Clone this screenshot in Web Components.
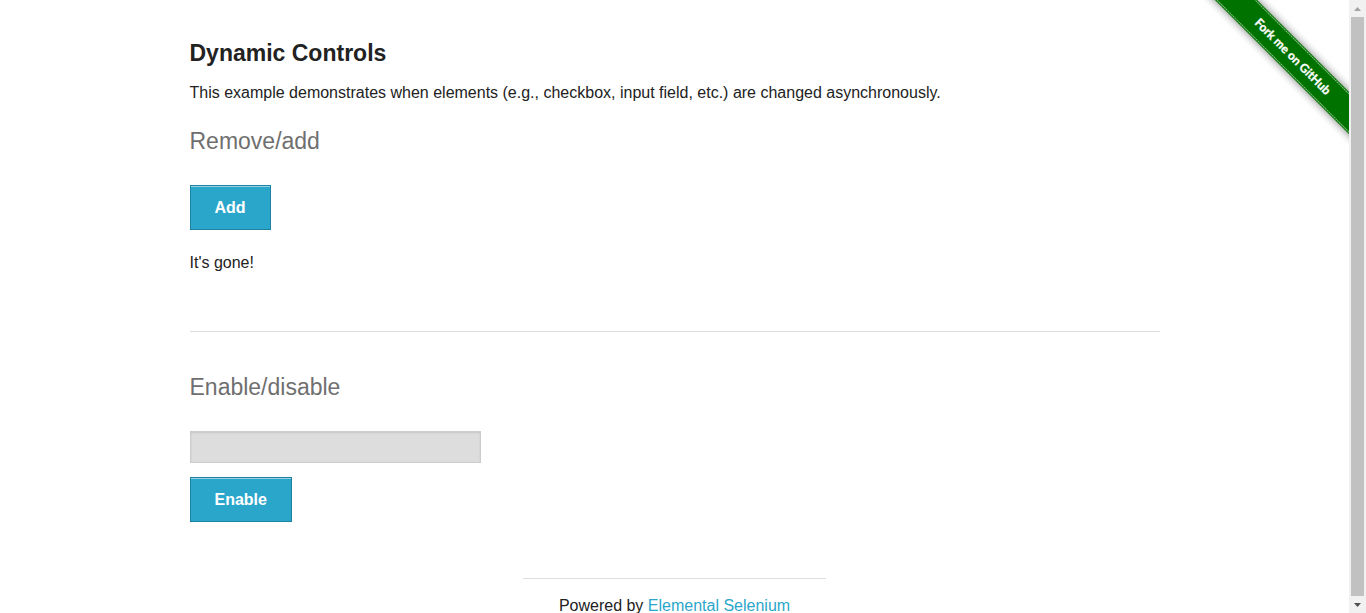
<!DOCTYPE html>
<html lang="en">
<head>
<meta charset="utf-8">
<title>The Internet</title>
<style>
body { margin: 0; background: #fff; color: #222; font: 16px/26px "Liberation Sans", Arial, sans-serif; }
</style>
</head>
<body>
<page-frame>
  <fork-ribbon slot="ribbon"></fork-ribbon>
  <page-content>
    <span slot="title">Dynamic Controls</span>
    <span slot="intro">This example demonstrates when elements (e.g., checkbox, input field, etc.) are changed asynchronously.</span>
    <checkbox-example></checkbox-example>
    <input-example></input-example>
  </page-content>
  <page-footer></page-footer>
</page-frame>

<script>
function define(name, html) {
  const template = document.createElement('template');
  template.innerHTML = '<style>:host,*{box-sizing:border-box}</style>' + html;
  customElements.define(name, class extends HTMLElement {
    constructor() {
      super();
      this.attachShadow({ mode: 'open' }).append(template.content.cloneNode(true));
    }
  });
}

define('page-frame', `
<style>
:host { display: grid; grid-template-columns: minmax(0, 1fr) 17px; height: 100vh; overflow: hidden; }
.view { position: relative; min-width: 0; overflow: hidden; }
</style>
<div class="view"><slot name="ribbon"></slot><slot></slot></div>
<scroll-track></scroll-track>`);

define('scroll-track', `
<style>
:host { display: flex; flex-direction: column; background: #f1f1f1; }
svg { display: block; width: 17px; height: 17px; flex: none; }
.thumb { flex: 1; margin: 0 2px; background: #c1c1c1; }
</style>
<svg viewBox="0 0 17 17" aria-hidden="true"><path d="M5 11 8.500 7 12 11Z" fill="#a3a3a3"/></svg>
<div class="thumb"></div>
<svg viewBox="0 0 17 17" aria-hidden="true"><path d="M5 7 8.500 11 12 7Z" fill="#505050"/></svg>`);

define('fork-ribbon', `
<style>
:host { position: absolute; top: 0; right: 0; display: block; z-index: 1; }
a, svg { display: block; }
text { font: bold 12px Lato, sans-serif; fill: #fff; stroke: #fff; stroke-width: .3px; }
.band { filter: drop-shadow(0 0 4px rgba(0,0,0,.5)); }
</style>
<a href="https://github.com/tourdedave/the-internet">
  <svg width="149" height="149" viewBox="0 0 149 149">
    <g transform="translate(92 56) rotate(45)">
      <rect class="band" x="-130" y="-15" width="260" height="30" fill="#007200"/>
      <path d="M-130-13.500H130M-130 13.500H130" stroke="#80bd80" stroke-dasharray="2 .5" fill="none"/>
      <text text-anchor="middle" x="1" y="4">Fork me on GitHub</text>
    </g>
  </svg>
</a>`);

define('page-content', `
<style>
:host { display: block; max-width: 1000px; margin: 0 auto; padding: 37px 15px 0; }
h1 { margin: 0 0 11px; font-size: 23px; line-height: 32px; }
p { margin: 0 0 19px; }
</style>
<main>
  <h1><slot name="title"></slot></h1>
  <p><slot name="intro"></slot></p>
  <slot></slot>
</main>`);

define('section-title', `
<style>
:host { display: block; margin-bottom: 28px; }
h2 { margin: 0; font-size: 23px; line-height: 32px; font-weight: 400; color: #6f6f6f; }
</style>
<h2><slot></slot></h2>`);

define('action-button', `
<style>
:host { display: block; }
button { display: block; height: 45px; padding: 0 24px; margin: 0; border: 1px solid #1e83a2; border-radius: 0;
  background: #2ba6cb; color: #fff; font: bold 16px/16px "Liberation Sans", Arial, sans-serif;
  box-shadow: inset 0 1px 0 rgba(255,255,255,.5); cursor: pointer; }
</style>
<button type="button"><slot></slot></button>`);

define('checkbox-example', `
<style>
:host { display: block; padding-bottom: 55px; border-bottom: 1px solid #ddd; }
p { margin: 20px 0 0; }
</style>
<section-title>Remove/add</section-title>
<action-button>Add</action-button>
<p>It's gone!</p>`);

define('input-example', `
<style>
:host { display: block; padding: 39px 0 56px; }
input { display: block; width: 30%; height: 32px; margin: 0 0 14px; padding: 8px; border: 1px solid #ccc; border-radius: 0;
  background: #ddd; box-shadow: inset 0 1px 2px rgba(0,0,0,.1); font: 14px "Liberation Sans", Arial, sans-serif; }
</style>
<section-title>Enable/disable</section-title>
<input type="text" aria-label="Enable/disable" disabled>
<action-button>Enable</action-button>`);

define('page-footer', `
<style>
:host { display: block; max-width: 333px; margin: 0 auto; padding: 0 15px; }
footer { padding-top: 14px; border-top: 1px solid #ddd; text-align: center; }
a { color: #2ba6cb; text-decoration: none; }
</style>
<footer>Powered by <a href="http://elementalselenium.com/">Elemental Selenium</a></footer>`);
</script>
</body>
</html>
